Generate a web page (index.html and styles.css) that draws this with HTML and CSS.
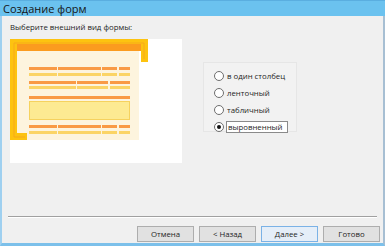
FILE: index.html
```html
<!DOCTYPE html>
<html lang="ru">
<head>
<meta charset="UTF-8">
<title>Создание форм</title>
<link rel="stylesheet" href="styles.css">
</head>
<body>
<div class="window">
    <div class="title-bar">Создание форм</div>
    <div class="content">
        <p class="prompt">Выберите внешний вид формы:</p>
        <div class="main-row">
            <div class="preview">
                <svg width="172" height="124" viewBox="0 0 172 124">
                    <!-- cream page -->
                    <rect x="5" y="5" width="124" height="96" fill="#fdf4de"/>
                    <!-- yellow frame -->
                    <path d="M0 0 H138 V23 H131 V6 H7 V94 H17 V101 H0 Z" fill="#fdc310"/>
                    <path d="M4 4 H134 V20" fill="none" stroke="#f7a91a" stroke-width="1"/>
                    <path d="M4 4 V98 H15" fill="none" stroke="#f7a91a" stroke-width="1"/>
                    <!-- header bar -->
                    <rect x="7" y="5" width="124" height="7" fill="#fb9b1f"/>
                    <!-- row 1 -->
                    <g fill="#f99a45">
                        <rect x="19" y="28" width="28" height="3"/>
                        <rect x="48" y="28" width="43" height="3"/>
                        <rect x="92" y="28" width="15" height="3"/>
                        <rect x="109" y="28" width="11" height="3"/>
                    </g>
                    <g fill="#fbd466">
                        <rect x="19" y="34" width="28" height="3"/>
                        <rect x="48" y="34" width="43" height="3"/>
                        <rect x="92" y="34" width="15" height="3"/>
                        <rect x="109" y="34" width="11" height="3"/>
                    </g>
                    <!-- row 2 -->
                    <g fill="#f99a45">
                        <rect x="19" y="42" width="47" height="3"/>
                        <rect x="67" y="42" width="31" height="3"/>
                        <rect x="100" y="42" width="20" height="3"/>
                    </g>
                    <g fill="#fbd466">
                        <rect x="19" y="47" width="47" height="3"/>
                        <rect x="67" y="47" width="31" height="3"/>
                        <rect x="100" y="47" width="20" height="3"/>
                    </g>
                    <!-- row 3 -->
                    <rect x="19" y="57" width="101" height="3" fill="#f99a45"/>
                    <rect x="19.5" y="62.5" width="100" height="18" fill="#fdea92" stroke="#f6d25e"/>
                    <!-- row 4 -->
                    <g fill="#f99a45">
                        <rect x="19" y="86" width="28" height="3"/>
                        <rect x="48" y="86" width="43" height="3"/>
                        <rect x="92" y="86" width="15" height="3"/>
                        <rect x="109" y="86" width="11" height="3"/>
                    </g>
                    <g fill="#fbd466">
                        <rect x="19" y="92" width="28" height="3"/>
                        <rect x="48" y="92" width="43" height="3"/>
                        <rect x="92" y="92" width="15" height="3"/>
                        <rect x="109" y="92" width="11" height="3"/>
                    </g>
                </svg>
            </div>
            <div class="radio-group">
                <div class="radio-item"><span class="radio"></span><span class="label">в один столбец</span></div>
                <div class="radio-item"><span class="radio"></span><span class="label">ленточный</span></div>
                <div class="radio-item"><span class="radio"></span><span class="label">табличный</span></div>
                <div class="radio-item"><span class="radio checked"></span><span class="label focused">выровненный</span></div>
            </div>
        </div>
    </div>
    <div class="separator"></div>
    <div class="button-row">
        <button class="btn">Отмена</button>
        <button class="btn">&lt; Назад</button>
        <button class="btn default">Далее &gt;</button>
        <button class="btn">Готово</button>
    </div>
</div>
</body>
</html>
```
FILE: styles.css
```css
body {
    margin: 0;
    padding: 0;
    background: #f0f0f0;
    font-family: "Open Sans", "Liberation Sans", sans-serif;
    color: #1e1e1e;
    overflow: hidden;
}
.window {
    width: 385px;
    height: 246px;
    box-sizing: border-box;
    display: flex;
    flex-direction: column;
    background: #f0f0f0;
    border-left: 2px solid #9fd0f0;
    border-right: 2px solid #a7bfd3;
    border-bottom: 3px solid #7cc0ea;
}
.title-bar {
    height: 15px;
    margin-left: -2px;
    margin-right: -2px;
    padding-left: 3px;
    background: #6bc2ef;
    border-top: 1px solid #5aaee0;
    font-size: 11px;
    line-height: 15px;
    color: #151515;
}
.content {
    flex: 1;
    padding: 0 0 0 8px;
}
.prompt {
    margin: 0;
    padding-top: 5px;
    height: 19px;
    box-sizing: border-box;
    font-size: 7.8px;
    line-height: 12px;
}
.main-row {
    display: flex;
    align-items: flex-start;
    gap: 21px;
    margin-top: 4px;
}
.preview {
    width: 172px;
    height: 124px;
    background: #ffffff;
}
.preview svg {
    display: block;
}
.radio-group {
    width: 94px;
    height: 70px;
    box-sizing: border-box;
    margin-top: 23px;
    padding: 8px 0 0 10px;
    border: 1px solid #e6e6e6;
    background: #f2f2f2;
    display: flex;
    flex-direction: column;
    gap: 7px;
}
.radio-item {
    display: flex;
    align-items: center;
    gap: 3px;
    height: 10px;
    font-size: 7.8px;
}
.radio {
    width: 8px;
    height: 8px;
    border: 1px solid #6e6e6e;
    border-radius: 50%;
    background: #ffffff;
    position: relative;
    flex: none;
}
.radio.checked::after {
    content: "";
    position: absolute;
    left: 2px;
    top: 2px;
    width: 4px;
    height: 4px;
    border-radius: 50%;
    background: #111;
}
.label {
    line-height: 10px;
}
.label.focused {
    border: 1px solid #8a8a8a;
    background: #ffffff;
    padding: 0 4px 0 1px;
    margin-left: -1px;
}
.separator {
    margin: 1px 6px 0 6px;
    height: 0;
    border-top: 1px solid #a0a0a0;
    border-bottom: 1px solid #ffffff;
}
.button-row {
    display: flex;
    justify-content: flex-end;
    gap: 5px;
    padding: 8px 3px 0 0;
    height: 25px;
    box-sizing: border-box;
}
.btn {
    width: 57px;
    height: 16px;
    padding: 0;
    margin: 0;
    border: 1px solid #adadad;
    background: #e1e1e1;
    font-family: "Open Sans", "Liberation Sans", sans-serif;
    font-size: 7.8px;
    color: #1e1e1e;
}
.btn.default {
    border-color: #7bb2e6;
    background: #e5eef8;
}
```
